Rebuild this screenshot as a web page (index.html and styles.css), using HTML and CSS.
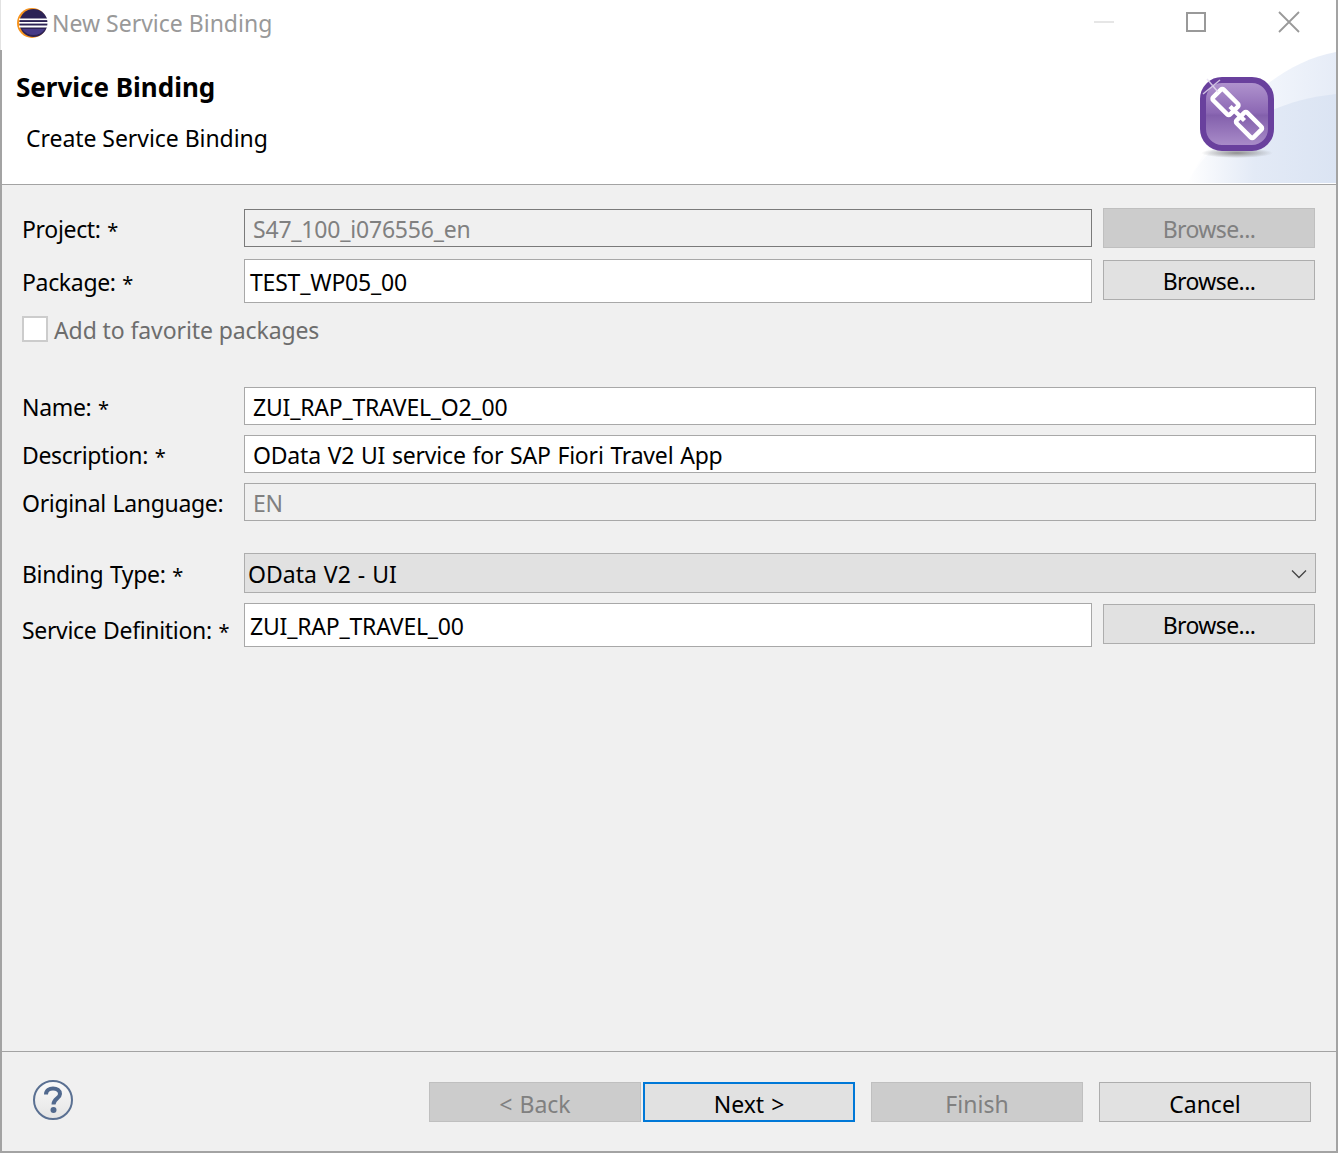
FILE: index.html
```html
<!DOCTYPE html>
<html lang="en">

<head>
  <meta charset="UTF-8">
  <meta name="viewport" content="width=device-width, initial-scale=1.0">
  <title>New Service Binding</title>
  <link rel="stylesheet" href="styles.css">
</head>

<body>
  <div class="window">
    <div class="titlebar">
      <svg class="app-logo" width="32" height="32" viewBox="0 0 32 32">
        <circle cx="15" cy="16" r="15" fill="#f7941e"/>
        <circle cx="16.5" cy="16" r="14" fill="#2c2255"/>
        <path d="M5 22 H28 A14 14 0 0 1 5 22 Z" fill="#473a86"/>
        <rect x="2" y="11.5" width="29" height="1.6" fill="#fff"/>
        <rect x="2" y="15" width="29" height="1.6" fill="#fff"/>
        <rect x="2" y="18.5" width="29" height="2" fill="#fff"/>
      </svg>
      <span class="window-title">New Service Binding</span>
      <div class="window-controls">
        <svg width="20" height="20" viewBox="0 0 20 20"><path d="M0 10 H20" stroke="#e6e6e6" stroke-width="2"/></svg>
        <svg width="20" height="20" viewBox="0 0 20 20"><rect x="1" y="1" width="18" height="18" fill="none" stroke="#999" stroke-width="2"/></svg>
        <svg width="22" height="22" viewBox="0 0 22 22"><path d="M1 1 L21 21 M21 1 L1 21" stroke="#999" stroke-width="1.8"/></svg>
      </div>
    </div>

    <header class="banner">
      <div class="banner-text">
        <h1>Service Binding</h1>
        <p>Create Service Binding</p>
      </div>
      <svg class="banner-art" width="148" height="134" viewBox="0 0 148 134">
        <defs>
          <linearGradient id="wash" x1="0" y1="0" x2="1" y2="0">
            <stop offset="0" stop-color="#fff"/>
            <stop offset="0.45" stop-color="#e3eaf6"/>
            <stop offset="1" stop-color="#dbe4f3"/>
          </linearGradient>
          <linearGradient id="wash2" x1="0" y1="0" x2="1" y2="0">
            <stop offset="0" stop-color="#fff"/>
            <stop offset="0.6" stop-color="#f0f4fb"/>
            <stop offset="1" stop-color="#e6ecf7"/>
          </linearGradient>
          <linearGradient id="tile" x1="0" y1="0" x2="0" y2="1">
            <stop offset="0" stop-color="#b397d0"/>
            <stop offset="0.48" stop-color="#8c68b4"/>
            <stop offset="0.52" stop-color="#8360ac"/>
            <stop offset="1" stop-color="#ac8fcb"/>
          </linearGradient>
          <radialGradient id="shade">
            <stop offset="0" stop-color="#8f8f8f"/>
            <stop offset="1" stop-color="#8f8f8f" stop-opacity="0"/>
          </radialGradient>
        </defs>
        <path d="M-3 133 C22 85 75 15 146 2 V133 Z" fill="url(#wash2)"/>
        <path d="M-3 133 C20 92 70 52 146 44 V133 Z" fill="url(#wash)"/>
        <ellipse cx="47" cy="103" rx="36" ry="5" fill="url(#shade)"/>
        <rect x="13" y="30" width="68" height="68" rx="19" fill="url(#tile)" stroke="#69409d" stroke-width="6"/>
        <g fill="none" stroke="#fff" stroke-width="4.5" stroke-linejoin="round">
          <rect x="-12" y="-7.5" width="24" height="15" rx="2" transform="translate(35.5 52) rotate(45)"/>
          <rect x="-12" y="-7.5" width="24" height="15" rx="2" transform="translate(59 75) rotate(45)"/>
          <path d="M40 56.5 L54.5 70.5"/>
        </g>
        <path d="M13 44 L30 30 M17 29 L28 42" stroke="#e8e0f2" stroke-width="1.5" opacity="0.8"/>
      </svg>
    </header>

    <main class="content">
      <form class="form">
        <div class="row row-project">
          <label>Project: <span class="req">*</span></label>
          <div class="field field-disabled field-h38 field-grey-line">S47_100_i076556_en</div>
          <button type="button" class="btn btn-browse" disabled>Browse...</button>
        </div>
        <div class="row row-package">
          <label>Package: <span class="req">*</span></label>
          <div class="field field-h44">TEST_WP05_00</div>
          <button type="button" class="btn btn-browse btn-raised">Browse...</button>
        </div>
        <div class="check-row">
          <span class="check-box"></span>
          <span class="check-label">Add to favorite packages</span>
        </div>

        <div class="row row-wide">
          <label>Name: <span class="req">*</span></label>
          <div class="field field-h38">ZUI_RAP_TRAVEL_O2_00</div>
        </div>
        <div class="row row-wide">
          <label>Description: <span class="req">*</span></label>
          <div class="field field-h38">OData V2 UI service for SAP Fiori Travel App</div>
        </div>
        <div class="row row-wide">
          <label>Original Language:</label>
          <div class="field field-disabled field-h38">EN</div>
        </div>

        <div class="row row-wide row-binding">
          <label>Binding Type: <span class="req">*</span></label>
          <div class="combo">
            <span>OData V2 - UI</span>
            <svg width="16" height="10" viewBox="0 0 16 10"><path d="M1 1.5 L8 8.5 L15 1.5" fill="none" stroke="#444" stroke-width="1.3"/></svg>
          </div>
        </div>
        <div class="row">
          <label class="label-low">Service Definition: <span class="req">*</span></label>
          <div class="field field-h44">ZUI_RAP_TRAVEL_00</div>
          <button type="button" class="btn btn-browse btn-raised">Browse...</button>
        </div>
      </form>
    </main>

    <footer class="footer">
      <svg class="help" width="42" height="42" viewBox="0 0 42 42">
        <defs>
          <linearGradient id="helpfill" x1="0" y1="0" x2="0" y2="1">
            <stop offset="0" stop-color="#fafafa"/>
            <stop offset="1" stop-color="#e4e4e4"/>
          </linearGradient>
        </defs>
        <circle cx="21" cy="21" r="19" fill="url(#helpfill)" stroke="#5a7092" stroke-width="2"/>
        <path d="M14 15.5 C14 11 17.5 9.5 21 9.5 C25 9.5 28 11.5 28 15 C28 19.5 21.5 19.5 21.5 25.5" fill="none" stroke="#51698e" stroke-width="4"/>
        <circle cx="21.5" cy="31" r="3" fill="#51698e"/>
      </svg>
      <div class="footer-buttons">
        <button type="button" class="btn btn-nav" disabled>&lt; Back</button>
        <button type="button" class="btn btn-nav btn-default">Next &gt;</button>
        <button type="button" class="btn btn-nav btn-finish" disabled>Finish</button>
        <button type="button" class="btn btn-nav btn-cancel">Cancel</button>
      </div>
    </footer>
  </div>
</body>

</html>
```

FILE: styles.css
```css
* {
  box-sizing: border-box;
}

body {
  margin: 0;
  background-color: white;
  font-family: "Noto Sans", "Open Sans", sans-serif;
  font-size: 23px;
  color: black;
}

.window {
  width: 1338px;
  height: 1153px;
  display: flex;
  flex-direction: column;
  background-color: #f0f0f0;
  border-right: 2px solid #a3a3a3;
  border-bottom: 2px solid #a3a3a3;
}

.titlebar {
  height: 50px;
  flex: none;
  display: flex;
  align-items: center;
  background-color: white;
  border-left: 1px solid #e2e2e2;
  padding: 0 36px 0 16px;
}

.app-logo {
  margin-top: -4px;
}

.window-title {
  margin-left: 3px;
  margin-top: -4px;
  color: #999;
}

.window-controls {
  margin-left: auto;
  display: flex;
  align-items: center;
  gap: 72px;
  margin-top: -6px;
}

.banner {
  height: 135px;
  flex: none;
  display: flex;
  justify-content: space-between;
  background-color: white;
  border-left: 2px solid #a3a3a3;
  border-bottom: 1px solid #a3a3a3;
}

.banner-text {
  padding: 19px 0 0 14px;
}

.banner h1 {
  margin: 0;
  font-size: 26px;
  line-height: 36px;
  font-weight: bold;
}

.banner p {
  margin: 16px 0 0 10px;
  line-height: 34px;
  letter-spacing: -0.05px;
}

.banner-art {
  margin-right: -2px;
  overflow: visible;
}

.content {
  flex: 1;
  border-left: 2px solid #a3a3a3;
  border-bottom: 1px solid #a3a3a3;
  padding: 23px 0 0 20px;
}

.row {
  display: grid;
  grid-template-columns: 222px 848px 223px;
  align-items: center;
  margin-bottom: 10px;
}

.row-wide {
  grid-template-columns: 222px 1072px;
}

.row-project {
  margin-bottom: 11px;
}

.row-package {
  margin-bottom: 13px;
}

.row-binding {
  margin-top: 32px;
}

.row label {
  line-height: 34px;
  padding-top: 1px;
  letter-spacing: -0.33px;
  word-spacing: 1px;
  white-space: nowrap;
}

.row label.label-low {
  padding-top: 10px;
}

.req {
  font-size: 20px;
  line-height: 1;
}

.field {
  display: flex;
  align-items: center;
  background-color: white;
  border: 1px solid #a8a8a8;
  padding: 2px 0 0 5px;
  letter-spacing: -0.2px;
  word-spacing: 1px;
  white-space: nowrap;
}

.field-h38 {
  height: 38px;
  padding-left: 8px;
}

.field-h44 {
  height: 44px;
}

.field-disabled {
  background-color: #f0f0f0;
  color: #808080;
}

.field-grey-line {
  border-color: #7a7a7a;
}

.btn {
  height: 40px;
  padding: 2px 0 0;
  font-family: inherit;
  font-size: 23px;
  color: black;
  background-color: #e1e1e1;
  border: 1px solid #adadad;
}

.btn:disabled {
  background-color: #cccccc;
  border-color: #bfbfbf;
  color: #808080;
}

.btn-browse {
  margin-left: 11px;
  letter-spacing: -0.6px;
}

.btn-raised {
  margin-bottom: 2px;
}

.check-row {
  display: flex;
  align-items: center;
  gap: 6px;
  height: 26px;
  margin-bottom: 45px;
}

.check-box {
  width: 26px;
  height: 26px;
  background-color: white;
  border: 2px solid #cccccc;
}

.check-label {
  padding-top: 2px;
  letter-spacing: -0.1px;
  color: #6d6d6d;
}

.combo {
  height: 40px;
  display: flex;
  align-items: center;
  justify-content: space-between;
  padding: 2px 8px 0 3px;
  word-spacing: 1px;
  background-color: #e1e1e1;
  border: 1px solid #adadad;
}

.footer {
  height: 99px;
  flex: none;
  display: flex;
  justify-content: space-between;
  border-left: 2px solid #a3a3a3;
  padding: 27px 25px 0 30px;
}

.footer-buttons {
  display: flex;
  gap: 2px;
  margin-top: 3px;
}

.btn-nav {
  width: 212px;
  padding-top: 3px;
  word-spacing: 1px;
}

.btn-default {
  border: 2px solid #0078d7;
}

.btn-finish {
  margin-left: 14px;
}

.btn-cancel {
  margin-left: 14px;
}
```
